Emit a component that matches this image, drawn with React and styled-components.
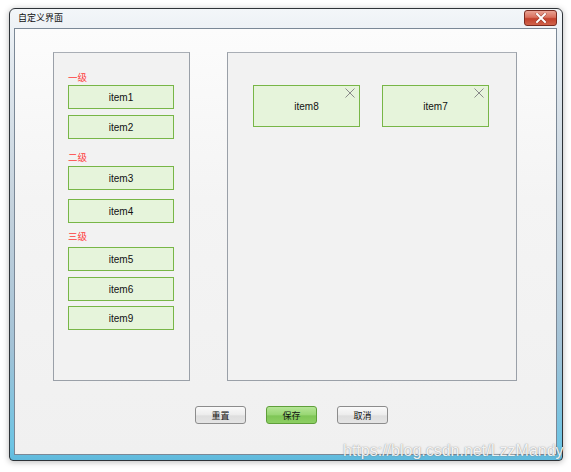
import React from 'react';
import styled, { createGlobalStyle } from 'styled-components';

const Global = createGlobalStyle`
  html, body { margin: 0; padding: 0; background: #ffffff; }
  body { font-family: "Liberation Sans", "Noto Sans CJK SC", sans-serif; }
`;

const Page = styled.div`
  position: relative;
  width: 571px;
  height: 472px;
  padding: 8px 0 0 9px;
  box-sizing: border-box;
  overflow: hidden;
`;

const Window = styled.div`
  width: 554px;
  height: 453px;
  box-sizing: border-box;
  border: 1px solid #2e3338;
  border-radius: 6px 6px 4px 4px;
  background: linear-gradient(
    to bottom,
    #f3f6f9 0%,
    #e2e9ef 12%,
    #c3d1dc 45%,
    #a3c2d6 75%,
    #6cc4e4 97%,
    #5fb9dc 100%
  );
  box-shadow: 0 1px 6px rgba(0, 0, 0, 0.28);
  display: flex;
  flex-direction: column;
  padding: 0 5px 5px 4px;
`;

const TitleBar = styled.div`
  height: 19px;
  display: flex;
  align-items: flex-start;
  justify-content: space-between;
  padding-left: 4px;
`;

const Title = styled.span`
  font-family: "Noto Sans CJK SC", sans-serif;
  font-size: 9px;
  line-height: 12px;
  margin-top: 3px;
  color: #111;
`;

const CloseButton = styled.div`
  width: 33px;
  height: 16px;
  margin-top: 1px;
  box-sizing: border-box;
  border: 1px solid #7a2b20;
  border-radius: 3px;
  background: linear-gradient(to bottom, #e9a394 0%, #d9705d 45%, #c2412c 55%, #d0634c 100%);
  display: flex;
  align-items: center;
  justify-content: center;
`;

const Client = styled.div`
  flex: 1;
  box-sizing: border-box;
  border: 1px solid #7b8896;
  background: linear-gradient(to bottom, #fcfcfc 0%, #f4f4f4 40%, #f0f0f0 100%);
  display: flex;
  flex-direction: column;
  padding: 23px 0 0 38px;
`;

const PanelRow = styled.div`
  display: flex;
  gap: 37px;
  align-items: flex-start;
`;

const Panel = styled.div`
  width: ${(p) => p.$w}px;
  height: 329px;
  box-sizing: border-box;
  border: 1px solid #9aa0a8;
  border-top-color: #a9aeb5;
  background: #f2f2f2;
`;

const LeftPanel = styled(Panel)`
  display: flex;
  flex-direction: column;
  padding-left: 14px;
`;

const RightPanel = styled(Panel)`
  display: flex;
  align-items: flex-start;
  gap: 22px;
  padding: 32px 0 0 25px;
`;

const Level = styled.div`
  font-family: "Noto Sans CJK SC", sans-serif;
  font-size: 9.5px;
  line-height: 12px;
  height: 12px;
  color: #ff3b3b;
  margin-top: ${(p) => p.$mt}px;
`;

const Item = styled.div`
  width: 106px;
  height: 24px;
  box-sizing: border-box;
  border: 1px solid #78b647;
  background: #e6f4db;
  display: flex;
  align-items: center;
  justify-content: center;
  font-size: 10px;
  color: #111;
  margin-top: ${(p) => p.$mt}px;
`;

const Card = styled.div`
  position: relative;
  width: 107px;
  height: 42px;
  box-sizing: border-box;
  border: 1px solid #78b647;
  background: #e6f4db;
  display: flex;
  align-items: center;
  justify-content: center;
  font-size: 10px;
  color: #111;
`;

const CardClose = styled.svg`
  position: absolute;
  top: 2px;
  right: 4px;
  width: 10px;
  height: 10px;
`;

const ButtonRow = styled.div`
  display: flex;
  gap: 20px;
  margin-top: 25px;
  padding-left: 142px;
`;

const Button = styled.div`
  width: 51px;
  height: 18px;
  box-sizing: border-box;
  border: 1px solid ${(p) => (p.$primary ? '#5f9f3a' : '#8c8c8c')};
  border-radius: 3px;
  background: ${(p) =>
    p.$primary
      ? 'linear-gradient(to bottom, #b5e596 0%, #98d673 50%, #7fc656 55%, #8dcf63 100%)'
      : 'linear-gradient(to bottom, #fafafa 0%, #ececec 50%, #dedede 55%, #e4e4e4 100%)'};
  display: flex;
  align-items: center;
  justify-content: center;
  font-family: "Noto Sans CJK SC", sans-serif;
  font-size: 9px;
  color: #111;
`;

const Watermark = styled.div`
  position: absolute;
  left: 343px;
  top: 442px;
  font-family: "Liberation Sans", sans-serif;
  font-size: 16px;
  color: rgba(255, 255, 255, 0.9);
  text-shadow: 0 0 1px rgba(80, 80, 80, 0.55), 0 0 2px rgba(120, 120, 120, 0.35);
  white-space: nowrap;
`;

const leftContent = [
  { type: 'level', text: '一级', mt: 18 },
  { type: 'item', text: 'item1', mt: 2 },
  { type: 'item', text: 'item2', mt: 6 },
  { type: 'level', text: '二级', mt: 12 },
  { type: 'item', text: 'item3', mt: 3 },
  { type: 'item', text: 'item4', mt: 9 },
  { type: 'level', text: '三级', mt: 7 },
  { type: 'item', text: 'item5', mt: 5 },
  { type: 'item', text: 'item6', mt: 6 },
  { type: 'item', text: 'item9', mt: 5 },
];

const selected = ['item8', 'item7'];

export default function App() {
  return (
    <>
      <Global />
      <Page>
        <Window>
          <TitleBar>
            <Title>自定义界面</Title>
            <CloseButton>
              <svg width="12" height="10" viewBox="0 0 12 10">
                <path d="M2 1 L10 9 M10 1 L2 9" stroke="rgba(90,20,10,0.5)" strokeWidth="3" strokeLinecap="square" />
                <path d="M2 1 L10 9 M10 1 L2 9" stroke="#ffffff" strokeWidth="2" strokeLinecap="square" />
              </svg>
            </CloseButton>
          </TitleBar>
          <Client>
            <PanelRow>
              <LeftPanel $w={137}>
                {leftContent.map((c, i) =>
                  c.type === 'level' ? (
                    <Level key={i} $mt={c.mt}>{c.text}</Level>
                  ) : (
                    <Item key={i} $mt={c.mt}>{c.text}</Item>
                  )
                )}
              </LeftPanel>
              <RightPanel $w={290}>
                {selected.map((s) => (
                  <Card key={s}>
                    {s}
                    <CardClose viewBox="0 0 10 10">
                      <path d="M0.5 0.5 L9.5 9.5 M9.5 0.5 L0.5 9.5" stroke="#8a8a8a" strokeWidth="1" />
                    </CardClose>
                  </Card>
                ))}
              </RightPanel>
            </PanelRow>
            <ButtonRow>
              <Button>重置</Button>
              <Button $primary>保存</Button>
              <Button>取消</Button>
            </ButtonRow>
          </Client>
        </Window>
        <Watermark>https://blog.csdn.net/LzzMandy</Watermark>
      </Page>
    </>
  );
}
